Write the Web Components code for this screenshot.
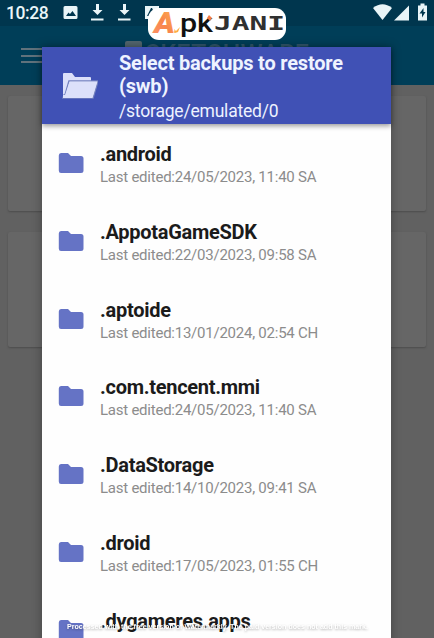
<!DOCTYPE html>
<html lang="vi">
<head>
<meta charset="utf-8">
<title>Sketchware</title>
<style>
  html, body { margin: 0; height: 100%; overflow: hidden; }
  body { font-family: Roboto, "Noto Sans", sans-serif; background: #626262; }
</style>
</head>
<body>
<app-screen>
  <status-bar slot="status" time="10:28"></status-bar>
  <app-toolbar slot="toolbar">SKETCHWARE</app-toolbar>
  <project-card></project-card>
  <project-card></project-card>
  <file-dialog slot="dialog" path="/storage/emulated/0">
    <span slot="title">Select backups to restore (swb)</span>
    <folder-row name=".android" date="24/05/2023, 11:40 SA"></folder-row>
    <folder-row name=".AppotaGameSDK" date="22/03/2023, 09:58 SA"></folder-row>
    <folder-row name=".aptoide" date="13/01/2024, 02:54 CH"></folder-row>
    <folder-row name=".com.tencent.mmi" date="24/05/2023, 11:40 SA"></folder-row>
    <folder-row name=".DataStorage" date="14/10/2023, 09:41 SA"></folder-row>
    <folder-row name=".droid" date="17/05/2023, 01:55 CH"></folder-row>
    <folder-row name=".dygameres.apps"></folder-row>
  </file-dialog>
  <apk-badge slot="badge"></apk-badge>
  <water-mark slot="mark">Processed with the free version of Watermarkly. The paid version does not add this mark.</water-mark>
</app-screen>

<script>
class BaseElement extends HTMLElement {
  constructor() {
    super();
    this.attachShadow({ mode: 'open' });
  }

  connectedCallback() {
    this.shadowRoot.innerHTML = `<style>${this.styles()}</style>${this.render()}`;
  }
}

class AppScreen extends BaseElement {
  styles() {
    return `
      :host { display: block; position: relative; width: 434px; height: 638px; overflow: hidden; background: #616161; }
      .cards { display: flex; flex-direction: column; gap: 21px; padding: 11px 8px; }
      slot[name="dialog"]::slotted(*) { position: absolute; left: 42px; top: 47px; }
      slot[name="badge"]::slotted(*) { position: absolute; left: 148px; top: 8px; }
      slot[name="mark"]::slotted(*) { position: absolute; left: 66px; top: 619px; }
    `;
  }

  render() {
    return `
      <slot name="status"></slot>
      <slot name="toolbar"></slot>
      <div class="cards"><slot></slot></div>
      <slot name="dialog"></slot>
      <slot name="badge"></slot>
      <slot name="mark"></slot>
    `;
  }
}

class StatusBar extends BaseElement {
  styles() {
    return `
      :host { display: flex; justify-content: space-between; height: 26px; padding: 0 4px 0 6px; background: #00364e; color: #e9f5f8; }
      .group { display: flex; align-items: center; }
      .time { width: 57px; font-size: 17.5px; font-weight: 500; line-height: 26px; letter-spacing: -.4px; }
      svg { display: block; fill: #e9f5f8; }
    `;
  }

  render() {
    return `
      <div class="group">
        <span class="time">${this.getAttribute('time')}</span>
        <svg width="96" height="26" viewBox="0 0 96 26">
          <path fill-rule="evenodd" d="M2 6h11q1.500 0 1.500 1.500v10q0 1.500-1.500 1.500H2Q.5 19 .5 17.500v-10Q.5 6 2 6zM3 16h10l-3.500-5-2.500 3-1.500-1.500z"/>
          <path d="M33 4h3v6h3.500l-5 5-5-5H33zM28 18.500h12.500v2H28z"/>
          <path d="M60 4h3v6h3.500l-5 5-5-5H60zM55 18.500h12.500v2H55z"/>
          <path fill-rule="evenodd" d="M82 6h14v13H82zM84 16h2l1-2h3l1 2h2L89 8h-1z"/>
        </svg>
      </div>
      <div class="group">
        <svg width="57" height="26" viewBox="0 0 57 26">
          <path d="M0 8Q9.500.5 19 8L9.500 20z"/>
          <path d="M36 5.500v15H21z"/>
          <path fill-rule="evenodd" d="M45 5.500h2.500V3.500h4v2H54v15h-9zM50.500 8l-4 5.500H49v4l3.500-5.500h-2z"/>
        </svg>
      </div>
    `;
  }
}

class AppToolbar extends BaseElement {
  styles() {
    return `
      :host { display: flex; align-items: flex-start; height: 59px; background: #003e58; color: #30566a; }
      svg { display: block; margin: 21px 0 0 21px; }
      .mark { width: 17px; height: 7px; margin: 15px 0 0 79px; background: #53666f; border-radius: 2px 2px 0 0; }
      .name { margin: 14px 0 0 3px; font-size: 25px; line-height: 30px; font-weight: 500; letter-spacing: .2px; }
    `;
  }

  render() {
    return `
      <svg width="25" height="18" viewBox="0 0 25 18" fill="#60727c">
        <path d="M0 1h25v2H0zM0 8h25v2H0zM0 14h25v2H0z"/>
      </svg>
      <div class="mark"></div>
      <div class="name"><slot></slot></div>
    `;
  }
}

class ProjectCard extends BaseElement {
  styles() {
    return `
      :host { display: block; height: 115px; border-radius: 2px; background: #666; box-shadow: 0 1px 2px #4c4c4c; }
    `;
  }

  render() {
    return '';
  }
}

class FileDialog extends BaseElement {
  styles() {
    return `
      :host { display: flex; flex-direction: column; width: 349px; height: 600px; background: #fefefe; box-shadow: 0 0 10px rgba(0,0,0,.3); }
      header { display: flex; flex: none; height: 77px; background: #4051b5; color: #eef3ff; box-shadow: 0 2px 5px rgba(0,0,0,.4); z-index: 1; }
      svg { display: block; margin: 25px 21px 0 20px; }
      .title { width: 240px; margin-top: 5px; font-size: 20px; line-height: 23px; font-weight: 700; letter-spacing: -.2px; }
      .path { margin-top: 2px; font-size: 17.5px; line-height: 22px; letter-spacing: -.2px; }
    `;
  }

  render() {
    return `
      <header>
        <svg width="36" height="28" viewBox="0 0 36 28">
          <path fill="#dce0fa" d="M1 2q0-1 1-1h8l3 4h15q1 0 1 1v5H8L4 22l-3 3z"/>
          <path fill="#dce0fa" stroke="#7380be" stroke-width="1.500" d="M7 9h29l-5 17H1l1-3h1z"/>
          <path fill="#dce0fa" d="M7.500 9.500h28L30.500 26H1V23h2z"/>
        </svg>
        <div>
          <div class="title"><slot name="title"></slot></div>
          <div class="path">${this.getAttribute('path')}</div>
        </div>
      </header>
      <slot></slot>
    `;
  }
}

class FolderRow extends BaseElement {
  styles() {
    return `
      :host { display: flex; flex: none; height: 77.8px; }
      svg { display: block; margin: 29px 16px 0 16px; }
      .name { margin-top: 18px; font-size: 20px; line-height: 24px; font-weight: 700; color: #1b1b1b; letter-spacing: -.28px; white-space: nowrap; }
      .date { margin-top: 1px; font-size: 15px; line-height: 20px; color: #8c8c8c; letter-spacing: -.24px; white-space: nowrap; }
    `;
  }

  render() {
    const date = this.getAttribute('date');
    return `
      <svg width="26" height="21" viewBox="0 0 26 21">
        <path fill="#6573c5" d="M3 0h7l3 3h10q2.500 0 2.500 2.500v12q0 2.500-2.500 2.500H3Q.8 20 .8 17.500v-15Q.8 0 3 0z"/>
      </svg>
      <div>
        <div class="name">${this.getAttribute('name')}</div>
        ${date ? `<div class="date">Last edited:${date}</div>` : ''}
      </div>
    `;
  }
}

class ApkBadge extends BaseElement {
  styles() {
    return `
      :host { display: block; width: 138px; height: 32px; border-radius: 11px; background: #fff; }
      svg { display: block; }
    `;
  }

  render() {
    return `
      <svg width="138" height="32" viewBox="0 0 138 32">
        <defs>
          <linearGradient id="orange" x1="0" y1="1" x2="1" y2="0">
            <stop offset="0" stop-color="#ff9468"/>
            <stop offset=".5" stop-color="#f8864d"/>
            <stop offset="1" stop-color="#ffb84e"/>
          </linearGradient>
        </defs>
        <g font-family="Roboto, sans-serif">
          <text x="6" y="25" font-size="29" font-weight="900" font-style="italic" fill="url(#orange)" textLength="21" lengthAdjust="spacingAndGlyphs">A</text>
          <text x="32" y="24" font-size="25" font-weight="500" fill="#111" textLength="33" lengthAdjust="spacingAndGlyphs">pk</text>
          <text transform="translate(66 22) scale(1 .8)" font-family="DejaVu Sans Mono, monospace" font-weight="700" font-size="24" fill="#303030" textLength="71" lengthAdjust="spacingAndGlyphs">JANI</text>
        </g>
        <path fill="#ffae43" d="M26 21l2 2 4-4-2 5-3 1zM25 24l2-1v2z"/>
        <path fill="#f47b43" d="M59 10l2-3 3 3-2 3z"/>
      </svg>
    `;
  }
}

class WaterMark extends BaseElement {
  styles() {
    return `
      :host { display: block; width: 303px; height: 14px; }
      svg { display: block; overflow: visible; filter: drop-shadow(0 1px 1px rgba(0,0,0,.3)); }
    `;
  }

  render() {
    return `
      <svg width="303" height="14">
        <text x="1" y="10" font-family="Liberation Sans, sans-serif" font-weight="700" font-size="7" fill="#fff" textLength="301" lengthAdjust="spacingAndGlyphs">${this.textContent}</text>
      </svg>
    `;
  }
}

customElements.define('app-screen', AppScreen);
customElements.define('status-bar', StatusBar);
customElements.define('app-toolbar', AppToolbar);
customElements.define('project-card', ProjectCard);
customElements.define('folder-row', FolderRow);
customElements.define('file-dialog', FileDialog);
customElements.define('apk-badge', ApkBadge);
customElements.define('water-mark', WaterMark);
</script>
</body>
</html>
